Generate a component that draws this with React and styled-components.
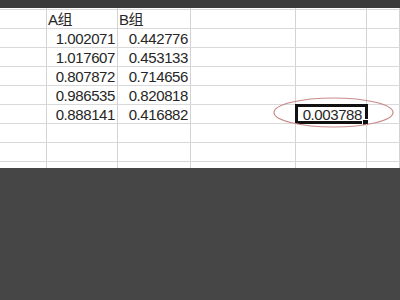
import styled, { createGlobalStyle } from "styled-components";

const GlobalStyle = createGlobalStyle`
    html, body {
        margin: 0;
        padding: 0;
        background: #464646;
    }
    body {
        font-family: "Liberation Sans", "Noto Sans CJK SC", sans-serif;
    }
`;

const widths = [47, 71, 73, 105, 71, 33];

const data = [
    ["", "A组", "B组", "", "", ""],
    ["", "1.002071", "0.442776", "", "", ""],
    ["", "1.017607", "0.453133", "", "", ""],
    ["", "0.807872", "0.714656", "", "", ""],
    ["", "0.986535", "0.820818", "", "", ""],
    ["", "0.888141", "0.416882", "", "0.003788", ""],
    ["", "", "", "", "", ""],
    ["", "", "", "", "", ""],
    ["", "", "", "", "", ""],
];

const App = () => {
    return (
        <>
            <GlobalStyle />
            <Page>
                <TopBar />
                <Sheet>
                    <Row $h={2}>
                        {widths.map((w, i) => <Cell key={i} $w={w} />)}
                    </Row>
                    {data.map((row, r) => (
                        <Row key={r} $h={19}>
                            {row.map((v, c) => {
                                const selected = r === 5 && c === 4;
                                return (
                                    <Cell key={c} $w={widths[c]} $header={r === 0} $selected={selected}>
                                        {v}
                                        {selected && (
                                            <>
                                                <Handle />
                                                <Ring viewBox="0 0 121 31">
                                                    <ellipse cx="60.5" cy="15.5" rx="59.5" ry="14.5" fill="none" stroke="#c98a8a" strokeWidth="1.2" />
                                                </Ring>
                                            </>
                                        )}
                                    </Cell>
                                );
                            })}
                        </Row>
                    ))}
                </Sheet>
            </Page>
        </>
    );
};

export default App;

const Page = styled.div`
    width: 400px;
    height: 300px;
    background: #464646;
    overflow: hidden;
`;

const TopBar = styled.div`
    height: 8px;
    background: #3b3b3b;
`;

const Sheet = styled.div`
    height: 160px;
    background: #fff;
    overflow: hidden;
`;

const Row = styled.div`
    display: flex;
    box-sizing: border-box;
    height: ${p => p.$h}px;
    border-bottom: 1px solid #d9d9d9;
`;

const Cell = styled.div`
    position: relative;
    flex: 0 0 ${p => p.$w}px;
    box-sizing: border-box;
    border-right: 1px solid #d3d3d3;
    font-size: 15px;
    letter-spacing: -0.4px;
    line-height: 20px;
    color: #262626;
    text-align: ${p => (p.$header ? "left" : "right")};
    padding: ${p => (p.$header ? "0 0 0 1px" : "0 2px 0 0")};
    white-space: nowrap;
    ${p => p.$selected && `
        outline: 3px solid #111;
        outline-offset: -2px;
        padding-right: 4px;
    `}
`;

const Handle = styled.span`
    position: absolute;
    right: -3px;
    bottom: -3px;
    width: 5px;
    height: 5px;
    background: #111;
    border: 1px solid #fff;
`;

const Ring = styled.svg`
    position: absolute;
    left: -23px;
    top: -8px;
    width: 121px;
    height: 31px;
    pointer-events: none;
`;
